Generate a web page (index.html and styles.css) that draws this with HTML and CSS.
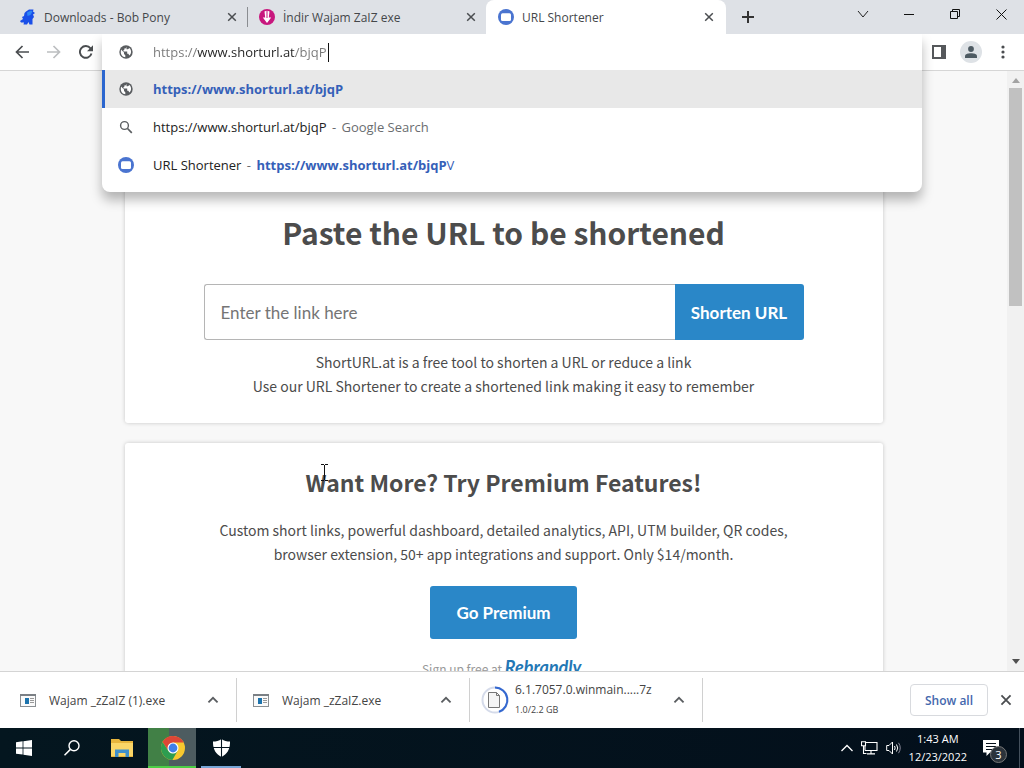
FILE: index.html
```html
<!DOCTYPE html>
<html lang="en">

<head>
    <meta charset="UTF-8">
    <meta name="viewport" content="width=device-width, initial-scale=1.0">
    <title>URL Shortener</title>
    <link rel="stylesheet" href="styles.css">
</head>

<body>
    <!-- shared icons -->
    <svg class="defs" width="0" height="0">
        <symbol id="i-globe" viewBox="0 0 14 14">
            <circle cx="7" cy="7" r="6.7" fill="#5a5d60" />
            <path d="M2 4.600L5 7.600V9l1.300 1.200V12.200C3.500 12 1.700 9.500 1.800 7zM7.500 1.700C7.300 3 6.600 3.600 5.300 3.600V5H4.500V6.500H8.200V8.800H9.400L10.300 10.600C12.500 8.500 12.800 5 10.300 2.900 9.700 4 8.800 4.300 7.500 4.200z" fill="#fff" />
        </symbol>
        <symbol id="i-short" viewBox="0 0 16 16">
            <circle cx="8" cy="8" r="8" fill="#4a74d0" />
            <rect x="3" y="4.200" width="10" height="7.800" rx="1.500" fill="#fff" />
        </symbol>
        <symbol id="i-x" viewBox="0 0 10 10">
            <path d="M1.200 1.200l7.600 7.600M8.800 1.200l-7.600 7.600" stroke="#4a4d50" stroke-width="1.500" fill="none" />
        </symbol>
        <symbol id="i-up" viewBox="0 0 10 10">
            <path d="M1.200 7L5 3.200l3.800 3.800" stroke="#5a5d60" stroke-width="1.500" fill="none" />
        </symbol>
        <symbol id="i-exe" viewBox="0 0 16 13">
            <rect x=".5" y=".5" width="15" height="12" fill="#fafafa" stroke="#8a8f93" />
            <path d="M0 1h16" stroke="#7b8085" stroke-width="2" />
            <rect x="5" y="4" width="4" height="6" fill="#1c73ad" />
            <path d="M10 4.500H14M10 6.500H14M10 8.500H14" stroke="#999" />
        </symbol>
    </svg>

    <header class="tabs">
        <div class="tab">
            <svg width="16" height="16" viewBox="0 0 16 16">
                <path d="M6 2.500L9 .500 13.500 .500 13 2.500 15 4 13 5.500 14 8 12.500 10 12.500 15.500H9.500L8.500 13 7 15.500H3.500L4 13.500 1 13.500 0 12 3 10 2 8 4 7 4.500 4z" fill="#1a4fe8" />
                <path d="M7 3.500l4-2 1.500 1-2 3.500-3 1z" fill="#2f87f5" />
            </svg>
            <span class="tab-title">Downloads - Bob Pony</span>
            <button class="tab-close" aria-label="Close tab"><svg width="10" height="10"><use href="#i-x" /></svg></button>
        </div>
        <div class="tab tab-second">
            <svg width="16" height="16" viewBox="0 0 16 16">
                <circle cx="8" cy="8" r="8" fill="#c8177e" />
                <path d="M5.500 2.500Q8 1 10.500 2.500L9.800 8.500H12.200L8 14 3.800 8.500H6.200z" fill="#fff" />
                <path d="M8 1v8" stroke="#c8177e" stroke-width="1" />
            </svg>
            <span class="tab-title">İndir Wajam ZaIZ exe</span>
            <button class="tab-close" aria-label="Close tab"><svg width="10" height="10"><use href="#i-x" /></svg></button>
        </div>
        <div class="tab tab-active">
            <svg width="16" height="16"><use href="#i-short" /></svg>
            <span class="tab-title">URL Shortener</span>
            <button class="tab-close" aria-label="Close tab"><svg width="10" height="10"><use href="#i-x" /></svg></button>
        </div>
        <button class="new-tab" aria-label="New tab">
            <svg width="12" height="12" viewBox="0 0 12 12"><path d="M6 0v12M0 6h12" stroke="#333" stroke-width="2" /></svg>
        </button>
        <div class="window-btns">
            <button aria-label="Search tabs"><svg width="12" height="12" viewBox="0 0 12 12"><path d="M1 3l5 6 5-6" stroke="#222" fill="none" /></svg></button>
            <button aria-label="Minimize"><svg width="10" height="10" viewBox="0 0 10 10"><path d="M0 5.500h10" stroke="#111" /></svg></button>
            <button aria-label="Restore"><svg width="10" height="10" viewBox="0 0 10 10"><path d="M.500 2.500h7v7h-7zM2.500 2.500v-2h7v7h-2" stroke="#111" fill="none" /></svg></button>
            <button aria-label="Close"><svg width="11" height="11" viewBox="0 0 11 11"><path d="M.500.500l10 10M10.500.500l-10 10" stroke="#111" fill="none" /></svg></button>
        </div>
    </header>

    <div class="toolbar">
        <div class="nav-btns">
            <button aria-label="Back"><svg width="14" height="14" viewBox="0 0 14 14"><path d="M14 7H1.500M7.500 1l-6 6 6 6" stroke="#4a4d50" stroke-width="1.700" fill="none" /></svg></button>
            <button aria-label="Forward"><svg width="14" height="14" viewBox="0 0 14 14"><path d="M0 7h12.500M6.500 1l6 6-6 6" stroke="#bcbec0" stroke-width="1.700" fill="none" /></svg></button>
            <button aria-label="Reload"><svg width="14" height="14" viewBox="0 0 14 14"><path d="M12.500 8.500A5.900 5.900 0 1 1 11.500 3.300L13 4.800" stroke="#4a4d50" stroke-width="1.900" fill="none" /><path d="M14 .300v6H8z" fill="#4a4d50" /></svg></button>
        </div>
        <div class="omnibox">
            <div class="omnibox-popup">
                <div class="omnibox-field">
                    <svg width="14" height="14"><use href="#i-globe" /></svg>
                    <input class="url" type="text" aria-label="Address bar" value="https://www.shorturl.at/bjqP">
                    <span class="caret"></span>
                </div>
                <a class="suggestion selected" href="#">
                    <svg width="14" height="14"><use href="#i-globe" /></svg>
                    <span class="match">https://www.shorturl.at/bjqP</span>
                </a>
                <a class="suggestion" href="#">
                    <svg width="14" height="14" viewBox="0 0 14 14"><circle cx="5.500" cy="5.500" r="3.900" fill="none" stroke="#5a5d60" stroke-width="1.400" /><path d="M8.500 8.500l4.300 4.300" stroke="#5a5d60" stroke-width="1.700" /></svg>
                    <span>https://www.shorturl.at/bjqP <span class="hint"><span class="dash">-</span> Google Search</span></span>
                </a>
                <a class="suggestion" href="#">
                    <svg width="16" height="16"><use href="#i-short" /></svg>
                    <span>URL Shortener <span class="hint dash">-</span> <span class="match">https://www.shorturl.at/bjqP</span><span class="rest">V</span></span>
                </a>
            </div>
        </div>
        <div class="tool-btns">
            <button aria-label="Side panel"><svg width="14" height="14" viewBox="0 0 14 14"><path d="M1 1h12v12H1z" stroke="#55585b" stroke-width="2" fill="#fff" /><path d="M9 1h4v12H9z" fill="#55585b" /></svg></button>
            <button class="profile" aria-label="Profile"><svg width="12" height="12" viewBox="0 0 12 12"><circle cx="6" cy="3" r="2.900" fill="#4d5a62" /><path d="M0 12V10.200C0 8 3 7.200 6 7.200S12 8 12 10.200V12z" fill="#4d5a62" /></svg></button>
            <button aria-label="Menu"><svg width="4" height="14" viewBox="0 0 4 14"><g fill="#4a4d50"><circle cx="2" cy="2" r="1.600" /><circle cx="2" cy="7" r="1.600" /><circle cx="2" cy="12" r="1.600" /></g></svg></button>
        </div>
    </div>

    <div class="viewport">
        <main class="page">
            <section class="card card-form">
                <h1>Paste the URL to be shortened</h1>
                <form class="shorten">
                    <input type="text" placeholder="Enter the link here" aria-label="Link to shorten">
                    <button type="button">Shorten URL</button>
                </form>
                <p>ShortURL.at is a free tool to shorten a URL or reduce a link<br>Use our URL Shortener to create a shortened link making it easy to remember</p>
            </section>
            <section class="card card-premium">
                <h2>Want More? Try Premium Features!</h2>
                <p>Custom short links, powerful dashboard, detailed analytics, API, UTM builder, QR codes, browser extension, 50+ app integrations and support. Only $14/month.</p>
                <a class="premium" href="#">Go Premium</a>
                <div class="signup">Sign up free at <a href="#">Rebrandly.</a></div>
            </section>
        </main>
        <div class="scrollbar">
            <svg width="8" height="5" viewBox="0 0 8 5"><path d="M0 5l4-5 4 5z" fill="#a3a3a3" /></svg>
            <div class="thumb"></div>
            <svg width="8" height="5" viewBox="0 0 8 5"><path d="M0 0l4 5 4-5z" fill="#505050" /></svg>
        </div>
        <svg class="cursor" width="7" height="17" viewBox="0 0 7 17"><path d="M0 .500h3M4 .500h3M3.500 1v15M0 16.500h3M4 16.500h3" stroke="#111" /></svg>
    </div>

    <div class="downloads">
        <div class="download">
            <svg width="16" height="13"><use href="#i-exe" /></svg>
            <span class="file">Wajam _zZaIZ (1).exe</span>
            <button aria-label="Options"><svg width="12" height="12"><use href="#i-up" /></svg></button>
        </div>
        <div class="download">
            <svg width="16" height="13"><use href="#i-exe" /></svg>
            <span class="file">Wajam _zZaIZ.exe</span>
            <button aria-label="Options"><svg width="12" height="12"><use href="#i-up" /></svg></button>
        </div>
        <div class="download download-active">
            <svg width="28" height="28" viewBox="0 0 28 28">
                <circle cx="14" cy="14" r="12.500" fill="none" stroke="#d5dbea" stroke-width="2" />
                <path d="M14 1.500A12.500 12.500 0 0 1 18 25.800" fill="none" stroke="#3468d0" stroke-width="2" />
                <path d="M7.500 6.500h8l3 3v12h-11z" fill="#f5f5f5" stroke="#777" />
                <path d="M15.500 6.500v3h3" fill="none" stroke="#777" />
            </svg>
            <span class="file">6.1.7057.0.winmain.....7z<small>1.0/2.2 GB</small></span>
            <button aria-label="Options"><svg width="12" height="12"><use href="#i-up" /></svg></button>
        </div>
        <button class="show-all">Show all</button>
        <button class="bar-close" aria-label="Close"><svg width="12" height="12"><use href="#i-x" /></svg></button>
    </div>

    <footer class="taskbar">
        <button aria-label="Start"><svg width="16" height="16" viewBox="0 0 16 16"><path d="M0 2.200l6.600-.9v6.200H0zM7.400 1.200L16 0v7.500H7.400zM0 8.400h6.600v6.200L0 13.700zM7.400 8.400H16V16l-8.600-1.200z" fill="#fff" /></svg></button>
        <button aria-label="Search"><svg width="16" height="16" viewBox="0 0 16 16"><circle cx="10" cy="5.800" r="5" fill="none" stroke="#fff" stroke-width="1.400" /><path d="M6.400 9.400L.5 15.300" stroke="#fff" stroke-width="1.500" /></svg></button>
        <button class="wide" aria-label="File Explorer"><svg width="22" height="18" viewBox="0 0 22 18"><path d="M0 0h8l2 2h12v16H0z" fill="#e8b53c" /><path d="M0 4h22v13H0z" fill="#fbd667" /><path d="M4 18v-7.500h14V18h-3.500v-4h-7v4z" fill="#3f8fcb" /></svg></button>
        <button class="chrome" aria-label="Chrome">
            <svg width="24" height="24" viewBox="0 0 24 24">
                <circle cx="12" cy="12" r="12" fill="#f7c82f" />
                <path d="M12 6.600H22.700A12 12 0 0 0 1.600 6L7.300 14.700z" fill="#dc4637" />
                <path d="M1.600 6A12 12 0 0 0 11.400 24L16.700 14.700 12 17.400 7.300 14.700z" fill="#2d9d50" />
                <circle cx="12" cy="12" r="5.500" fill="#fff" />
                <circle cx="12" cy="12" r="4.400" fill="#3f7fe8" />
            </svg>
        </button>
        <button class="shield" aria-label="Security"><svg width="17" height="18" viewBox="0 0 17 18"><path d="M8.500 0C11 2 14 2.500 17 2.500 17.200 10 14.500 15 8.500 18 2.500 15-.2 10 0 2.500 3 2.500 6 2 8.500 0z" fill="#fff" /><path d="M8.500 0v18M0 8.500h17" stroke="#04141f" stroke-width="1.100" /></svg></button>
        <div class="tray">
            <svg width="12" height="8" viewBox="0 0 12 8"><path d="M.5 7L6 1.500 11.500 7" stroke="#fff" stroke-width="1.300" fill="none" /></svg>
            <svg width="17" height="14" viewBox="0 0 17 14"><path d="M5 1.500h11v8H4M4 9.500V5M10 9.500v3M6 12.900h8M.5.800h4v4h-4zM2.500 5v7.500h3" stroke="#fff" stroke-width="1.100" fill="none" /></svg>
            <svg width="15" height="14" viewBox="0 0 15 14"><path d="M.7 4.500h2.300L6.500 1v12L3 9.500H.700z" stroke="#fff" fill="none" /><path d="M8.500 5q1.300 2 0 4M10.500 3.500q2.500 3.500 0 7" stroke="#fff" fill="none" /><path d="M12.500 1.800q3.500 5 0 10.400" stroke="#889" fill="none" /></svg>
            <div class="clock"><div>1:43 AM</div><div>12/23/2022</div></div>
            <div class="notify">
                <svg width="16" height="16" viewBox="0 0 16 16"><path d="M0 0h16v12.500H7L3.500 16v-3.500H0z" fill="#fff" /><path d="M3 3.500h10M3 6.500h10M3 9.500h7" stroke="#06101b" /></svg>
                <span class="count">3</span>
            </div>
        </div>
    </footer>
</body>

</html>
```
FILE: styles.css
```css
* {
    box-sizing: border-box;
}

body {
    margin: 0;
    height: 100vh;
    display: flex;
    flex-direction: column;
    overflow: hidden;
    font-family: "Open Sans", "Noto Sans", sans-serif;
    font-size: 12px;
    color: #333;
    background: #f8f8f8;
}

button {
    border: none;
    padding: 0;
    background: none;
    font-family: inherit;
    color: #444;
    display: flex;
    align-items: center;
    justify-content: center;
    flex-shrink: 0;
}

svg {
    flex-shrink: 0;
}

a {
    text-decoration: none;
}

.defs {
    position: absolute;
}

/* tab strip */
.tabs {
    display: flex;
    height: 34px;
    flex-shrink: 0;
    background: #dee1e6;
}

.tab {
    display: flex;
    align-items: center;
    gap: 8px;
    flex: 0 1 239px;
    min-width: 0;
    padding: 0 8px 0 20px;
    color: #44474a;
}

.tab:first-child {
    flex-basis: 247px;
    padding-right: 10px;
}

.tab-second {
    padding: 0 10px 0 12px;
    background: linear-gradient(#8a8d91, #8a8d91) left center / 1px 20px no-repeat;
}

.tab-active {
    flex-basis: 240px;
    padding: 0 12px;
    background: #fff;
    border-radius: 8px 8px 0 0;
}

.tab-title {
    flex: 1;
    white-space: nowrap;
    overflow: hidden;
}

.tab-close {
    width: 10px;
    height: 16px;
}

.new-tab {
    width: 44px;
}

.window-btns {
    display: flex;
    margin-left: auto;
    height: 28px;
}

.window-btns button {
    width: 46px;
}

/* toolbar */
.toolbar {
    display: flex;
    height: 37px;
    flex-shrink: 0;
    background: #fff;
    border-bottom: 1px solid #d6d6d6;
    position: relative;
    z-index: 2;
}

.nav-btns {
    display: flex;
    width: 102px;
    padding-left: 6px;
}

.nav-btns button {
    width: 32px;
}

.omnibox {
    flex: 1;
    position: relative;
}

.omnibox-popup {
    position: absolute;
    left: 0;
    right: 0;
    top: 0;
    padding-bottom: 8px;
    background: #fff;
    border-radius: 0 0 8px 8px;
    box-shadow: 0 8px 12px rgba(0, 0, 0, 0.28);
    clip-path: inset(0 -20px -24px -20px);
}

.omnibox-field,
.suggestion {
    display: flex;
    align-items: center;
    height: 38px;
    padding-left: 17px;
    font-size: 13px;
    color: #222;
}

.omnibox-field {
    height: 36px;
}

.omnibox-field svg,
.suggestion svg {
    width: 14px;
    margin-right: 20px;
}

.suggestion svg[width="16"] {
    width: 16px;
    margin: 0 19px 0 -1px;
}

.url {
    border: none;
    outline: none;
    padding: 0;
    font: inherit;
    field-sizing: content;
    /* scheme and path are dimmed, host is dark */
    color: transparent;
    background: linear-gradient(90deg, #777 44px, #222 44px, #222 142px, #777 142px);
    background-clip: text;
    -webkit-background-clip: text;
}

.caret {
    width: 1px;
    height: 19px;
    margin-left: 1px;
    background: #111;
}

.suggestion.selected {
    background: #e8e8e8;
    border-left: 3px solid #2b66cf;
    padding-left: 14px;
}

.match {
    font-weight: bold;
    color: #3560b8;
}

.rest {
    color: #3560b8;
}

.hint {
    color: #6a6d70;
}

.dash {
    margin: 0 2px;
}

.tool-btns {
    display: flex;
    align-items: center;
    justify-content: center;
    width: 102px;
    padding-right: 5px;
    gap: 14px;
}

.profile {
    width: 22px;
    height: 22px;
    border-radius: 50%;
    background: #dee2e6;
}

.tool-btns button:last-child {
    width: 14px;
}

/* web page */
.viewport {
    display: flex;
    flex: 1;
    min-height: 0;
    overflow: hidden;
    position: relative;
}

.page {
    flex: 1;
    padding: 20px 24px 0;
    font-family: "Noto Sans CJK SC", sans-serif;
    font-size: 14px;
    line-height: 24px;
    color: #4c4c4c;
    text-align: center;
}

.card {
    max-width: 758px;
    margin: 0 auto 20px;
    background: #fff;
    border-radius: 3px;
    box-shadow: 0 0 4px rgba(0, 0, 0, 0.2);
}

.card p {
    margin: 0;
}

.card-form {
    padding: 120px 79px 25px;
}

.card h1 {
    margin: 0 0 30px;
    font-size: 30px;
    line-height: 43px;
}

.shorten {
    display: flex;
    height: 56px;
    margin-bottom: 10px;
}

.shorten input {
    flex: 1;
    min-width: 0;
    padding: 0 16px;
    border: 1px solid #b5b5b5;
    border-right: none;
    border-radius: 3px 0 0 3px;
    background: #fff;
    font-family: Lato, sans-serif;
    font-size: 17px;
}

.shorten input::placeholder {
    color: #757575;
}

.shorten button,
.premium {
    background: #2a87c8;
    color: #fff;
    font-family: Lato, sans-serif;
    font-size: 17px;
    font-weight: bold;
}

.shorten button {
    width: 129px;
    border-radius: 0 3px 3px 0;
}

.card-premium {
    padding: 23px 79px;
}

.card h2 {
    margin: 0 0 20px;
    font-size: 23px;
    line-height: 32px;
}

.premium {
    display: inline-block;
    margin-top: 20px;
    padding: 0 26px;
    line-height: 53px;
    border-radius: 3px;
}

.signup {
    margin-top: 16px;
    font-size: 12px;
    color: #999;
}

.signup a {
    font-family: Lato, sans-serif;
    font-size: 18px;
    font-style: italic;
    font-weight: bold;
    color: #2377b5;
}

.scrollbar {
    display: flex;
    flex-direction: column;
    align-items: center;
    width: 17px;
    padding: 7px 0;
    background: #f1f1f1;
}

.thumb {
    flex: 0 0 218px;
    width: 13px;
    margin: 5px 0 auto;
    background: #c1c1c1;
}

/* mouse pointer over the page */
.cursor {
    position: absolute;
    left: 321px;
    top: 393px;
}

/* download shelf */
.downloads {
    display: flex;
    align-items: center;
    height: 57px;
    flex-shrink: 0;
    background: #fff;
    border-top: 1px solid #d4d4d4;
}

.download {
    display: flex;
    align-items: center;
    flex: 0 1 233px;
    min-width: 0;
    height: 44px;
    padding: 0 17px 0 16px;
    border-right: 1px solid #d0d0d0;
}

.download:first-child {
    flex-basis: 237px;
    padding-left: 20px;
}

.file {
    flex: 1;
    margin-left: 13px;
    font-size: 12px;
    white-space: nowrap;
    color: #444;
}

.download-active {
    padding-left: 11px;
}

.download-active .file {
    margin-left: 6px;
    line-height: 20px;
}

.file small {
    display: block;
    font-size: 9px;
}

.show-all {
    margin-left: auto;
    width: 78px;
    height: 32px;
    border: 1px solid #d8dade;
    border-radius: 4px;
    font-size: 12px;
    font-weight: 600;
    color: #4468ad;
}

.bar-close {
    width: 36px;
    height: 32px;
}

/* taskbar */
.taskbar {
    display: flex;
    height: 40px;
    flex-shrink: 0;
    background: linear-gradient(90deg, #04161f, #030f1b);
    color: #fff;
}

.taskbar button {
    width: 48px;
}

.taskbar .wide {
    width: 52px;
}

.taskbar .chrome {
    background: linear-gradient(90deg, #418046 21px, #4d5c60 21px);
    border-bottom: 2px solid #4cce45;
    padding: 2px 0 0 2px;
}

.taskbar .shield {
    width: 40px;
    margin-left: 5px;
    border-bottom: 2px solid #77a5d6;
    padding-top: 2px;
}

.tray {
    display: flex;
    align-items: center;
    gap: 8px;
    margin-left: auto;
    padding-right: 20px;
    margin-right: 4px;
    border-right: 1px solid #44505c;
}

.clock {
    text-align: center;
    font-size: 11px;
    line-height: 18px;
    white-space: nowrap;
}

.notify {
    position: relative;
    margin-left: 8px;
    height: 16px;
}

/* badge */
.count {
    position: absolute;
    left: 7px;
    top: 6px;
    width: 17px;
    height: 17px;
    border: 1px solid #777;
    border-radius: 50%;
    background: #2b333b;
    font-size: 11px;
    line-height: 15px;
    text-align: center;
}
```
